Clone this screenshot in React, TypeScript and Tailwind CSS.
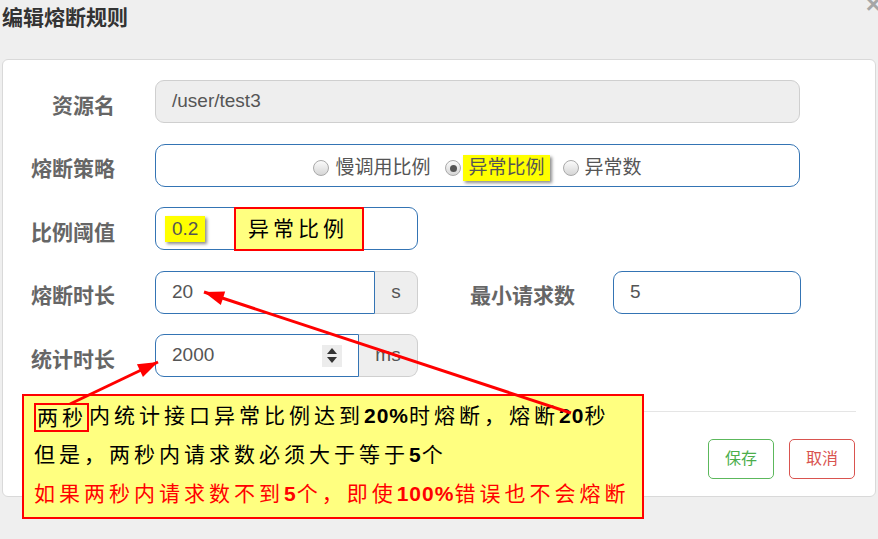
import React from "react";

type Pt = [number, number];

// arrow head as a filled triangle at the tip
function arrowHead(from: Pt, to: Pt, len = 20, half = 7) {
  const dx = to[0] - from[0];
  const dy = to[1] - from[1];
  const d = Math.hypot(dx, dy);
  const ux = dx / d;
  const uy = dy / d;
  const bx = to[0] - ux * len;
  const by = to[1] - uy * len;
  return `${to[0]},${to[1]} ${bx - uy * half},${by + ux * half} ${bx + uy * half},${by - ux * half}`;
}

const ARROWS: { from: Pt; to: Pt }[] = [
  { from: [70, 404], to: [158, 362] },
  { from: [571, 413], to: [204, 292] },
];

function Label({ children }: { children: React.ReactNode }) {
  return (
    <div className="w-[112px] shrink-0 text-right text-[21px] font-bold text-[#666] mt-[8px] leading-[26px]">
      {children}
    </div>
  );
}

function Radio({ checked = false }: { checked?: boolean }) {
  return (
    <span className="w-[16px] h-[16px] shrink-0 rounded-full border border-[#a9a9a9] bg-linear-to-b from-[#fbfbfb] to-[#d6d6d6] flex items-center justify-center">
      {checked && <span className="w-[7px] h-[7px] rounded-full bg-[#555]" />}
    </span>
  );
}

export default function App() {
  return (
    <div className="relative w-[878px] h-[539px] overflow-hidden bg-[#efefef] font-['Liberation_Sans','Noto_Sans_CJK_SC',sans-serif]">
      {/* Title */}
      <div className="h-[59px] pl-[2px] pt-[6px]">
        <p className="text-[21px] leading-[24px] font-bold text-[#333]">编辑熔断规则</p>
      </div>
      <span className="absolute right-[-3px] top-[-9px] text-[26px] font-bold leading-none text-[#a6a6a6]">×</span>

      {/* Panel */}
      <div className="ml-[2px] w-[874px] h-[438px] rounded-[6px] border border-[#d9d9d9] bg-white pt-[20px]">
        <div className="flex flex-col gap-[20.5px]">
          {/* 资源名 */}
          <div className="flex items-center h-[43px] gap-[40px]">
            <Label>资源名</Label>
            <div className="w-[645px] h-[43px] rounded-[9px] border border-[#cfcfcf] bg-[#eee] pl-[16px] flex items-center text-[19px] text-[#555]">
              /user/test3
            </div>
          </div>

          {/* 熔断策略 */}
          <div className="flex items-center h-[43px] gap-[40px]">
            <Label>熔断策略</Label>
            <div className="w-[645px] h-[43px] rounded-[10px] border border-[#3474b4] flex items-center justify-center text-[19px] text-[#555] pt-[6px]">
              <div className="flex items-center">
                <Radio />
                <span className="ml-[6px]">慢调用比例</span>
              </div>
              <div className="flex items-center ml-[15px]">
                <Radio checked />
                <span className="ml-[2px] px-[5px] h-[26px] leading-[26px] bg-[#ffff00] shadow-[2px_2px_3px_rgba(0,0,0,0.45)]">
                  异常比例
                </span>
              </div>
              <div className="flex items-center ml-[13px]">
                <Radio />
                <span className="ml-[6px]">异常数</span>
              </div>
            </div>
          </div>

          {/* 比例阈值 */}
          <div className="flex items-center h-[43px] gap-[40px]">
            <Label>比例阈值</Label>
            <div className="relative w-[263px] h-[43px] rounded-[9px] border border-[#3474b4] pl-[9px] flex items-center">
              <span className="px-[7px] h-[26px] leading-[26px] text-[19px] text-[#555] bg-[#ffff00] shadow-[2px_2px_3px_rgba(0,0,0,0.45)]">
                0.2
              </span>
              <div className="absolute left-[78px] top-[-1px] w-[130px] h-[44px] border-2 border-[#ff0000] bg-[#ffff80] pl-[12px] flex items-center text-[21px] tracking-[4px] text-black">
                异常比例
              </div>
            </div>
          </div>

          {/* 熔断时长 / 最小请求数 */}
          <div className="flex items-center h-[43px]">
            <Label>熔断时长</Label>
            <div className="ml-[40px] flex h-[43px]">
              <div className="w-[220px] rounded-l-[9px] border border-[#3474b4] pl-[16px] flex items-center text-[19px] text-[#555]">
                20
              </div>
              <div className="w-[43px] rounded-r-[9px] border border-l-0 border-[#cfcfcf] bg-[#eee] flex items-center justify-center text-[19px] text-[#555]">
                s
              </div>
            </div>
            <div className="ml-[52px] text-[21px] font-bold text-[#666] mt-[8px] leading-[26px]">最小请求数</div>
            <div className="ml-[38px] w-[188px] h-[43px] rounded-[9px] border border-[#3474b4] pl-[16px] flex items-center text-[19px] text-[#555]">
              5
            </div>
          </div>

          {/* 统计时长 */}
          <div className="flex items-center h-[43px]">
            <Label>统计时长</Label>
            <div className="ml-[40px] flex h-[43px]">
              <div className="w-[204px] rounded-l-[9px] border border-[#3474b4] pl-[16px] pr-[16px] flex items-center justify-between text-[19px] text-[#555]">
                <span>2000</span>
                <span className="w-[20px] h-[22px] bg-[#ececec] flex flex-col items-center justify-center gap-[3px]">
                  <svg width="10" height="6" viewBox="0 0 10 6">
                    <path d="M5 0 L10 6 L0 6 Z" fill="#333" />
                  </svg>
                  <svg width="10" height="6" viewBox="0 0 10 6">
                    <path d="M0 0 L10 0 L5 6 Z" fill="#333" />
                  </svg>
                </span>
              </div>
              <div className="w-[59px] rounded-r-[9px] border border-l-0 border-[#cfcfcf] bg-[#eee] flex items-center justify-center text-[19px] text-[#555]">
                ms
              </div>
            </div>
          </div>
        </div>

        {/* Footer */}
        <div className="mt-[34px] ml-[20px] mr-[19px] border-t border-[#e5e5e5]" />
        <div className="mt-[27px] flex justify-end gap-[15px] pr-[20px]">
          <button className="w-[66px] h-[40px] rounded-[5px] border border-[#5cb85c] text-[16px] text-[#4cae4c] bg-white">
            保存
          </button>
          <button className="w-[66px] h-[40px] rounded-[5px] border border-[#d9534f] text-[16px] text-[#d9534f] bg-white">
            取消
          </button>
        </div>
      </div>

      {/* Annotation */}
      <div className="absolute left-[22px] top-[394px] w-[622px] h-[125px] border-2 border-[#ff0000] bg-[#ffff80] pl-[10px] pt-0 text-[21px] leading-[39px] tracking-[4px] text-black whitespace-nowrap">
        <p>
          <span className="inline-block border-2 border-[#ff0000] pl-[1px] leading-[25px] align-middle">两秒</span>
          内统计接口异常比例达到<b className="tracking-[1px]">20%</b>时熔断，熔断<b className="tracking-[1px]">20</b>秒
        </p>
        <p>
          但是，两秒内请求数必须大于等于<b className="tracking-[1px]">5</b>个
        </p>
        <p className="text-[#ff0000]">
          如果两秒内请求数不到<b className="tracking-[1px]">5</b>个，即使<b className="tracking-[1px]">100%</b>错误也不会熔断
        </p>
      </div>

      {/* Arrows */}
      <svg className="absolute left-0 top-0 pointer-events-none" width="878" height="539" viewBox="0 0 878 539">
        {ARROWS.map((a, i) => (
          <g key={i}>
            <line x1={a.from[0]} y1={a.from[1]} x2={a.to[0]} y2={a.to[1]} stroke="#ff0000" strokeWidth="3" />
            <polygon points={arrowHead(a.from, a.to)} fill="#ff0000" />
          </g>
        ))}
      </svg>
    </div>
  );
}
